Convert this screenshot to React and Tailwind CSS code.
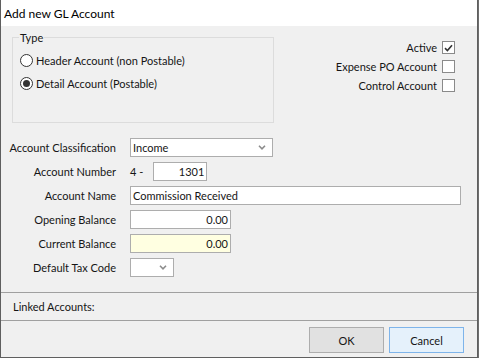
import React from "react";

const font = { fontFamily: 'Lato, "Noto Sans", sans-serif' };

function Radio({ checked, label }) {
  return (
    <div className="flex h-[13px] items-center gap-[3px]">
      <span className="flex h-[13px] w-[13px] items-center justify-center rounded-full border border-[#333333] bg-white">
        {checked && <span className="h-[7px] w-[7px] rounded-full bg-[#333333]" />}
      </span>
      <span className="whitespace-nowrap leading-none">{label}</span>
    </div>
  );
}

function Check({ checked, label }) {
  return (
    <div className="flex h-[13px] items-center justify-end gap-[5px]">
      <span className="whitespace-nowrap leading-none">{label}</span>
      <span className="flex h-[13px] w-[13px] items-center justify-center border border-[#8a8a8a] bg-white">
        {checked && (
          <svg width="9" height="8" viewBox="0 0 9 8">
            <path d="M1 4.2 L3.4 6.5 L8 1.2" fill="none" stroke="#333" strokeWidth="1.6" />
          </svg>
        )}
      </span>
    </div>
  );
}

function Chevron() {
  return (
    <svg width="8" height="5" viewBox="0 0 8 5">
      <path d="M1 0.8 L4 3.8 L7 0.8" fill="none" stroke="#8c8c8c" strokeWidth="1.6" />
    </svg>
  );
}

function Row({ label, children }) {
  return (
    <div className="flex h-[19px] items-center">
      <div className="w-[115px] whitespace-nowrap text-right leading-none">{label}</div>
      <div className="ml-[14px] flex h-full items-center">{children}</div>
    </div>
  );
}

export default function App() {
  return (
    <div className="h-[358px] w-[479px] bg-[#6e6e6e] text-[11px] text-[#151515]" style={font}>
      <div className="flex h-[358px] w-[478px] flex-col border-x border-b border-[#5f5f5f] bg-[#f0f0f0]">
        {/* title */}
        <div className="flex h-[26px] items-center bg-white pl-[3px] pt-[1px] text-[12px] text-black">
          Add new GL Account
        </div>

        {/* top */}
        <div className="flex justify-between pl-[11px] pr-[22px]">
          <div className="relative mt-[11px] h-[86px] w-[262px] border border-[#dcdcdc]">
            <span className="absolute -top-[8px] left-[6px] bg-[#f0f0f0] px-[1px] leading-[16px]">Type</span>
            <div className="flex flex-col gap-[10px] pl-[7px] pt-[16px]">
              <Radio label="Header Account (non Postable)" />
              <Radio checked label="Detail Account (Postable)" />
            </div>
          </div>
          <div className="mt-[15px] flex flex-col gap-[6px]">
            <Check checked label="Active" />
            <Check label="Expense PO Account" />
            <Check label="Control Account" />
          </div>
        </div>

        {/* form */}
        <div className="mt-[15px] flex flex-col gap-[5px]">
          <Row label="Account Classification">
            <div className="flex h-[19px] w-[143px] items-center justify-between border border-[#adadad] bg-white pl-[2px] pr-[6px]">
              <span className="leading-none">Income</span>
              <Chevron />
            </div>
          </Row>
          <Row label="Account Number">
            <span className="leading-none">4 -</span>
            <div className="ml-[10px] flex h-[19px] w-[54px] items-center justify-end border border-[#adadad] bg-white pr-[2px] leading-none">
              1301
            </div>
          </Row>
          <Row label="Account Name">
            <div className="flex h-[19px] w-[331px] items-center border border-[#adadad] bg-white pl-[2px] leading-none">
              Commission Received
            </div>
          </Row>
          <Row label="Opening Balance">
            <div className="flex h-[19px] w-[101px] items-center justify-end border border-[#adadad] bg-white pr-[2px] leading-none">
              0.00
            </div>
          </Row>
          <Row label="Current Balance">
            <div className="flex h-[19px] w-[101px] items-center justify-end border border-[#adadad] bg-[#ffffe1] pr-[2px] leading-none">
              0.00
            </div>
          </Row>
          <Row label="Default Tax Code">
            <div className="flex h-[19px] w-[44px] items-center justify-end border border-[#adadad] bg-white pr-[6px]">
              <Chevron />
            </div>
          </Row>
        </div>

        {/* linked */}
        <div className="mt-[15px] flex h-[29px] items-center border-y border-[#a0a0a0] pl-[12px] leading-none">
          Linked Accounts:
        </div>

        {/* footer */}
        <div className="flex flex-1 justify-end gap-[5px] pr-[13px] pt-[6px]">
          <button className="h-[26px] w-[75px] border border-[#adadad] bg-[#e1e1e1] leading-none">OK</button>
          <button className="h-[26px] w-[75px] border border-[#7eb4ea] bg-[#e5f1fb] leading-none">Cancel</button>
        </div>
      </div>
    </div>
  );
}
